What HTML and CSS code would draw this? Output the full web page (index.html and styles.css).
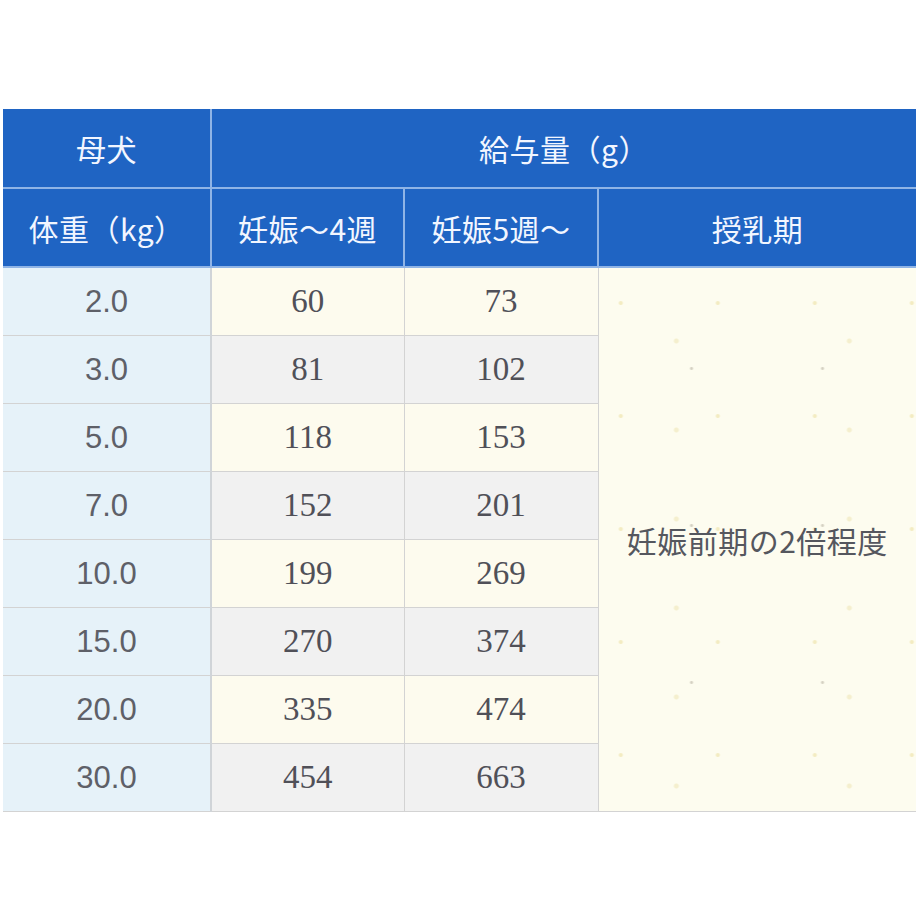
FILE: index.html
```html
<!DOCTYPE html>
<html lang="ja">
<head>
<meta charset="utf-8">
<link rel="stylesheet" href="styles.css">
</head>
<body>
<table class="feed">
  <colgroup>
    <col class="c1"><col class="c2"><col class="c3"><col class="c4">
  </colgroup>
  <thead>
    <tr class="h1">
      <th>母犬</th>
      <th colspan="3">給与量（g）</th>
    </tr>
    <tr class="h2">
      <th>体重（kg）</th>
      <th>妊娠～4週</th>
      <th>妊娠5週～</th>
      <th>授乳期</th>
    </tr>
  </thead>
  <tbody>
    <tr class="odd"><td class="w">2.0</td><td>60</td><td>73</td><td class="note" rowspan="8">妊娠前期の2倍程度</td></tr>
    <tr class="even"><td class="w">3.0</td><td>81</td><td>102</td></tr>
    <tr class="odd"><td class="w">5.0</td><td>118</td><td>153</td></tr>
    <tr class="even"><td class="w">7.0</td><td>152</td><td>201</td></tr>
    <tr class="odd"><td class="w">10.0</td><td>199</td><td>269</td></tr>
    <tr class="even"><td class="w">15.0</td><td>270</td><td>374</td></tr>
    <tr class="odd"><td class="w">20.0</td><td>335</td><td>474</td></tr>
    <tr class="even"><td class="w">30.0</td><td>454</td><td>663</td></tr>
  </tbody>
</table>
</body>
</html>
```
FILE: styles.css
```css
html, body {
  margin: 0;
  padding: 0;
  background: #ffffff;
}
body {
  padding: 109px 4px 0 3px;
  font-family: "Noto Sans CJK JP", "Noto Sans", sans-serif;
}
.feed {
  width: 913px;
  border-collapse: collapse;
  table-layout: fixed;
}
.c1 { width: 208px; }
.c2 { width: 193px; }
.c3 { width: 194px; }
.c4 { width: 318px; }

.feed th {
  background: #1f64c3;
  color: #f2f6ff;
  font-weight: 400;
  font-size: 30px;
  letter-spacing: 0.5px;
  text-align: center;
  border: 2px solid #8fb4e6;
  padding: 0;
}
.feed thead tr:first-child th { border-top: none; }
.feed th:first-child { border-left: none; }
.feed th:last-child { border-right: none; }
.h1 { height: 79px; }
.h2 { height: 79px; }

.feed td {
  height: 67px;
  padding: 0;
  text-align: center;
  font-family: "Liberation Serif", "Noto Sans CJK JP", serif;
  font-size: 33px;
  color: #505058;
  border: 1px solid #d3d3d3;
}
.feed td:first-child { border-left: none; }
.odd td { background: #fdfbee; }
.even td { background: #f1f1f1; }
.feed td.w {
  background: #e6f2f9;
  font-family: "Liberation Sans", "Noto Sans", sans-serif;
  font-size: 31px;
  color: #5e6068;
  border-right: 2px solid #d0d4d8;
}
.feed td.note {
  background-color: #fdfcef;
  background-image:
    radial-gradient(circle at 23% 31%, rgba(225, 205, 110, 0.35) 0 1.5px, transparent 2.5px),
    radial-gradient(circle at 71% 64%, rgba(120, 110, 90, 0.3) 0 1px, transparent 2px),
    radial-gradient(circle at 45% 82%, rgba(225, 210, 130, 0.3) 0 2px, transparent 3px);
  background-size: 97px 113px, 131px 157px, 173px 89px;
  font-family: "Noto Sans CJK JP", "Noto Sans", sans-serif;
  font-size: 30px;
  letter-spacing: 0.5px;
  color: #55575e;
  border-right: none;
}
```
